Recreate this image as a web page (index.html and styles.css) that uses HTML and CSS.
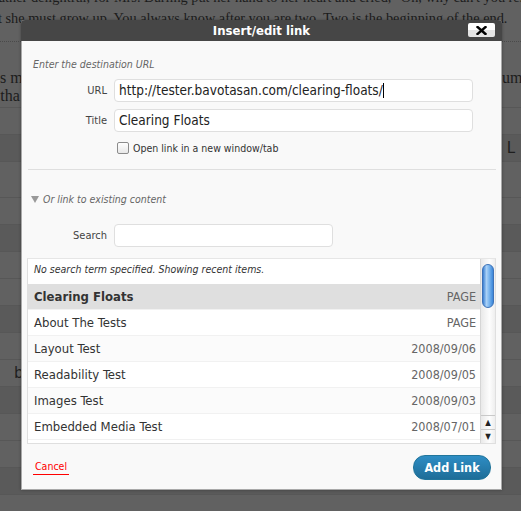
FILE: index.html
```html
<!DOCTYPE html>
<html lang="en">
<head>
  <meta charset="UTF-8" />
  <title>Insert/edit link</title>
  <link rel="stylesheet" href="styles.css">
</head>
<body>
  <!-- page behind the overlay -->
  <div class="page">
    <p class="story first">rather delightful, for Mrs. Darling put her hand to her heart and cried, "Oh, why can't you remain like this for ever!"</p>
    <p class="story second">t she must grow up. You always know after you are two. Two is the beginning of the end.</p>
    <div class="dots"></div>
    <div class="story-split"><span>a's m</span><span>umm</span></div>
    <div class="story-split"><span>s tha</span><span></span></div>
    <div class="rows">
      <div class="row"></div>
      <div class="row dark"><span></span><span>L</span></div>
      <div class="row tall"></div>
      <div class="row"></div>
      <div class="row dark"></div>
      <div class="row"></div>
      <div class="row"></div>
      <div class="row dark"></div>
      <div class="row"></div>
      <div class="row"><span>be</span><span></span></div>
      <div class="row dark"></div>
      <div class="row"></div>
      <div class="row"></div>
      <div class="row dark"></div>
      <div class="row"></div>
      <div class="row"></div>
    </div>
  </div>

  <!-- link dialog -->
  <div class="dialog">
    <div class="dialog-title">
      <span>Insert/edit link</span>
      <button class="close">
        <svg width="11" height="9" viewBox="0 0 11 9">
          <path d="M1.5 1 L9.5 8 M9.5 1 L1.5 8" stroke="#000" stroke-width="2.4" stroke-linecap="square"/>
        </svg>
      </button>
    </div>

    <div class="dialog-body">
      <p class="howto">Enter the destination URL</p>

      <div class="field">
        <label>URL</label>
        <div class="input wide">http://tester.bavotasan.com/clearing-floats/<i class="caret"></i></div>
      </div>
      <div class="field">
        <label>Title</label>
        <div class="input wide">Clearing Floats</div>
      </div>
      <div class="check-row">
        <span class="checkbox"></span>
        <span>Open link in a new window/tab</span>
      </div>

      <hr class="divider">

      <p class="toggle"><span class="arrow"></span>Or link to existing content</p>

      <div class="field search">
        <label>Search</label>
        <div class="input short"></div>
      </div>

      <div class="results">
        <div class="list">
          <div class="notice">No search term specified. Showing recent items.</div>
          <div class="item selected"><span>Clearing Floats</span><span class="meta">PAGE</span></div>
          <div class="item"><span>About The Tests</span><span class="meta">PAGE</span></div>
          <div class="item alt"><span>Layout Test</span><span class="meta">2008/09/06</span></div>
          <div class="item"><span>Readability Test</span><span class="meta">2008/09/05</span></div>
          <div class="item alt"><span>Images Test</span><span class="meta">2008/09/03</span></div>
          <div class="item"><span>Embedded Media Test</span><span class="meta">2008/07/01</span></div>
          <div class="item"><span></span><span></span></div>
        </div>
        <div class="scrollbar">
          <div class="track"><div class="thumb"></div></div>
          <div class="step">&#9650;</div>
          <div class="step">&#9660;</div>
        </div>
      </div>

      <div class="footer">
        <a class="cancel" href="#">Cancel</a>
        <button class="submit">Add Link</button>
      </div>
    </div>
  </div>
</body>
</html>
```

FILE: styles.css
```css
* {
  margin: 0; padding: 0; box-sizing: border-box;
}
body {
  background: #616161;
  font-family: 'DejaVu Sans Condensed', 'DejaVu Sans', sans-serif;
  color: #333;
  width: 521px;
  height: 511px;
  overflow: hidden;
}

/* Page under the overlay */
.page {
  font-family: 'Liberation Serif', serif;
  font-size: 14.3px;
  color: #1c1c1c;
}
.story {
  white-space: nowrap;
  line-height: 20px;
}
.story.first {
  margin-top: -13px;
  margin-left: -6px;
}
.story.second {
  margin-top: 1px;
  margin-left: -2px;
}
.dots {
  margin-top: 13px;
  border-top: 1px dotted #4a4a4a;
}
.story-split {
  display: flex;
  justify-content: space-between;
  line-height: 18px;
  font-size: 16px;
  margin-left: -10px;
  margin-right: -14px;
}
.dots + .story-split {
  margin-top: 27px;
}
.rows {
  margin-top: 2px;
  border-top: 1px solid #575757;
}
.row {
  height: 27px;
  border-bottom: 1px solid #575757;
  display: flex;
  justify-content: space-between;
  align-items: center;
  padding: 0 6px 0 14px;
  font-size: 15px;
  font-family: 'DejaVu Sans', sans-serif;
  color: #1e1e1e;
}
.row.tall {
  height: 36px;
}
.row.dark {
  background: #5a5a5a;
}

/* Dialog */
.dialog {
  position: absolute;
  left: 21px;
  top: 20px;
  width: 481px;
  height: 470px;
  background: #f9f9f9;
  border: 1px solid #a9a9a9;
  border-top: none;
  border-radius: 4px 4px 0 0;
  box-shadow: 0 0 3px rgba(0,0,0,0.35);
}
.dialog-title {
  height: 21px;
  background: #464646;
  border-radius: 4px 4px 0 0;
  color: #fff;
  font-weight: bold;
  font-size: 13px;
  text-align: center;
  line-height: 21px;
  position: relative;
  margin: 0 -1px;
}
.close {
  position: absolute;
  right: 7px;
  top: 3px;
  width: 27px;
  height: 14px;
  border: none;
  border-radius: 2px;
  background: linear-gradient(#fff 50%, #e4e4e4 50%);
  display: flex;
  align-items: center;
  justify-content: center;
}

.dialog-body {
  padding: 0 5px;
}
.howto {
  font-size: 10.5px;
  font-style: italic;
  color: #666;
  padding: 16px 0 0 6px;
  line-height: 14px;
}
.field {
  display: flex;
  align-items: center;
  gap: 7px;
  margin-top: 7px;
}
.howto + .field {
  margin-top: 8px;
}
.field label {
  width: 80px;
  text-align: right;
  font-size: 11px;
  color: #444;
}
.input {
  height: 23px;
  background: #fff;
  border: 1px solid #dfdfdf;
  border-radius: 4px;
  font-size: 13.5px;
  color: #222;
  line-height: 21px;
  padding: 0 4px;
  white-space: nowrap;
}
.input.wide {
  width: 359px;
}
.input.short {
  width: 219px;
}
.caret {
  display: inline-block;
  width: 1px;
  height: 15px;
  background: #000;
  vertical-align: -3px;
}
.check-row {
  display: flex;
  align-items: center;
  gap: 4px;
  margin: 10px 0 0 90px;
  font-size: 10.5px;
  color: #333;
}
.checkbox {
  width: 12px;
  height: 12px;
  border: 1px solid #8c8c8c;
  border-radius: 2px;
  background: linear-gradient(#fff, #e8e8e8);
}
.divider {
  border: none;
  border-top: 1px solid #dfdfdf;
  margin: 15px 0 0 1px;
}
.toggle {
  font-size: 10.5px;
  font-style: italic;
  color: #666;
  margin: 22px 0 0 4px;
  line-height: 14px;
  display: flex;
  align-items: center;
}
.arrow {
  width: 0;
  height: 0;
  border-left: 4px solid transparent;
  border-right: 4px solid transparent;
  border-top: 7px solid #999;
  margin-right: 4px;
}
.field.search {
  margin-top: 18px;
}

/* Results list */
.results {
  margin-top: 11px;
  height: 186px;
  border: 1px solid #dfdfdf;
  border-top-color: #e6e6e6;
  display: flex;
  background: #fff;
}
.list {
  flex: 1;
  overflow: hidden;
}
.notice {
  height: 25px;
  font-size: 10.5px;
  font-style: italic;
  color: #333;
  padding: 4px 0 0 6px;
}
.item {
  height: 26px;
  border-bottom: 1px solid #f1f1f1;
  display: flex;
  justify-content: space-between;
  align-items: center;
  padding: 0 4px 0 6px;
  font-size: 13px;
  color: #333;
  background: #fff;
}
.item.alt {
  background: #fbfbfb;
}
.item.selected {
  background: #dfdfdf;
  font-weight: bold;
}
.item .meta {
  font-weight: normal;
  font-size: 12.5px;
  color: #666;
}

/* Aqua style scrollbar */
.scrollbar {
  width: 15px;
  display: flex;
  flex-direction: column;
  border-left: 1px solid #d6d6d6;
  background: linear-gradient(to right, #e9e9e9, #fdfdfd 60%, #eeeeee);
}
.track {
  flex: 1;
  padding: 5px 1px 0 1px;
}
.thumb {
  height: 44px;
  border-radius: 7px;
  border: 1px solid #3d72b8;
  background: linear-gradient(to right, #3a7fd2, #a9d1f7 35%, #7db7ef 60%, #3a86d9);
}
.step {
  height: 14px;
  border-top: 1px solid #c9c9c9;
  font-size: 8px;
  line-height: 13px;
  text-align: center;
  color: #222;
}

.footer {
  display: flex;
  justify-content: space-between;
  align-items: center;
  margin-top: 11px;
  padding: 0 5px 0 6px;
}
.cancel {
  font-size: 10.5px;
  color: #f00;
  text-decoration: none;
  border-bottom: 1px solid #f00;
  padding: 0 2px 2px;
}
.submit {
  width: 78px;
  height: 25px;
  border: 1px solid #21759b;
  border-radius: 12px;
  background: linear-gradient(#2e8dc4, #1e6d98);
  color: #fff;
  font-family: 'DejaVu Sans Condensed', 'DejaVu Sans', sans-serif;
  font-weight: bold;
  font-size: 12.5px;
}
```
